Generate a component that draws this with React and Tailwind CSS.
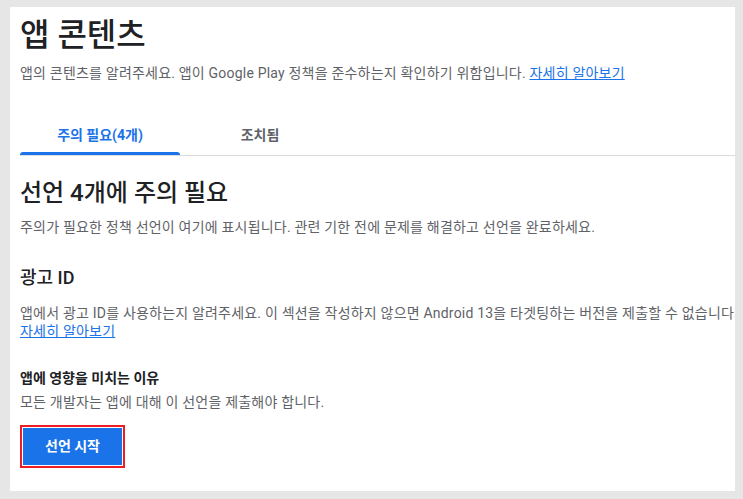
import React from 'react';

const font = { fontFamily: 'Roboto, "Noto Sans CJK KR", sans-serif' };

export default function App() {
    return (
        <div className="h-[499px] w-[743px] bg-[#e6e6e6] pt-[7px] pl-[10px] pr-[8px] pb-[8px]" style={font}>
            <div className="h-full bg-white overflow-hidden pl-[10px]">
                <h1 className="pt-[6px] text-[32px] leading-[44px] font-medium text-[#202124]">앱 콘텐츠</h1>
                <p className="mt-[6px] text-[14px] leading-[20px] tracking-[0.2px] text-[#5f6368]">
                    앱의 콘텐츠를 알려주세요. 앱이 Google Play 정책을 준수하는지 확인하기 위함입니다.{' '}
                    <a className="text-[#1a73e8] underline">자세히 알아보기</a>
                </p>

                {/* Tabs */}
                <div className="mt-[42px] flex border-b border-[#dadce0]">
                    <div className="w-[160px] flex flex-col items-center">
                        <span className="text-[14px] leading-[20px] font-bold text-[#1a73e8]">주의 필요(4개)</span>
                        <div className="mt-[7px] h-[3px] w-full bg-[#1a73e8] rounded-t-[3px]"></div>
                    </div>
                    <div className="w-[160px] flex flex-col items-center">
                        <span className="text-[14px] leading-[20px] font-bold text-[#5f6368]">조치됨</span>
                    </div>
                </div>

                <h2 className="mt-[21px] text-[24px] leading-[32px] font-medium text-[#202124]">선언 4개에 주의 필요</h2>
                <p className="mt-[8px] text-[14px] leading-[20px] tracking-[0.2px] text-[#5f6368]">
                    주의가 필요한 정책 선언이 여기에 표시됩니다. 관련 기한 전에 문제를 해결하고 선언을 완료하세요.
                </p>

                <h3 className="mt-[29px] text-[18px] leading-[24px] font-medium text-[#202124]">광고 ID</h3>
                <p className="mt-[14px] text-[14px] leading-[18px] tracking-[0.2px] text-[#5f6368] whitespace-nowrap">
                    앱에서 광고 ID를 사용하는지 알려주세요. 이 섹션을 작성하지 않으면 Android 13을 타겟팅하는 버전을 제출할 수 없습니다.
                </p>
                <a className="block text-[14px] leading-[18px] tracking-[0.2px] text-[#1a73e8] underline">자세히 알아보기</a>

                <h4 className="mt-[28px] text-[14px] leading-[20px] font-bold text-[#202124]">앱에 영향을 미치는 이유</h4>
                <p className="mt-[4px] text-[14px] leading-[20px] tracking-[0.2px] text-[#5f6368]">모든 개발자는 앱에 대해 이 선언을 제출해야 합니다.</p>

                <div className="mt-[13px] inline-block border-2 border-[#ee1c25] p-px">
                    <button className="h-[37px] w-[99px] bg-[#1a73e8] text-white text-[14px] font-bold">선언 시작</button>
                </div>
            </div>
        </div>
    );
}
